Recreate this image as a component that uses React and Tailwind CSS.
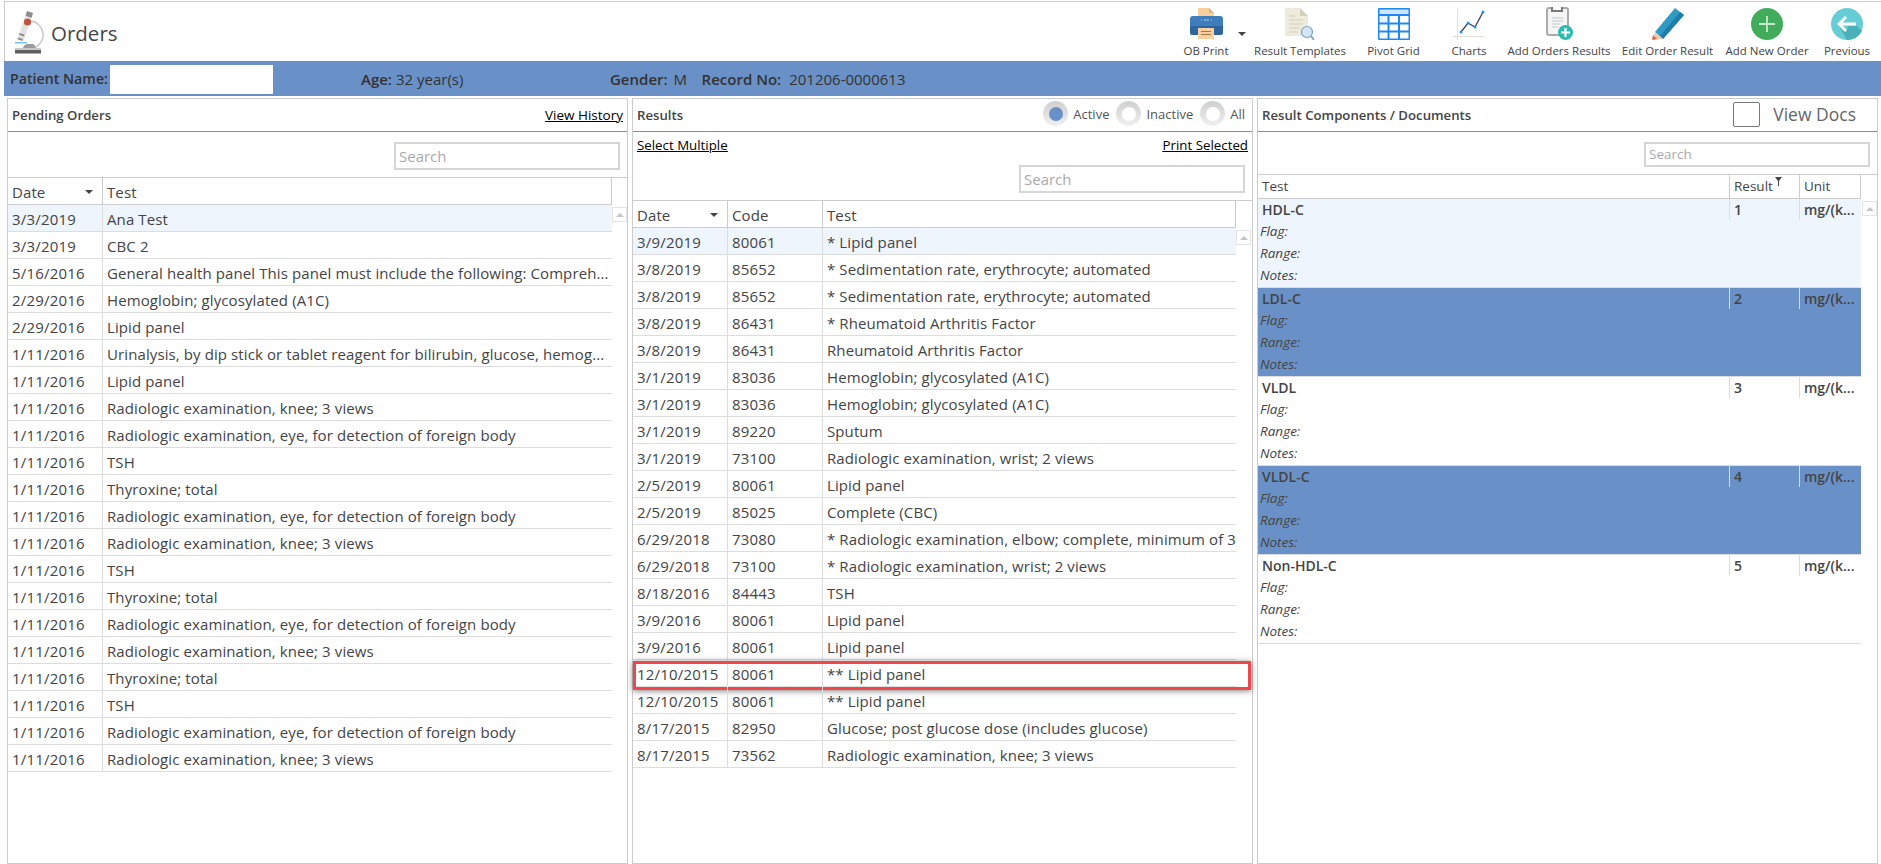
const font = "font-['Open_Sans','Liberation_Sans',sans-serif]";

const pendingOrders = [
	[ '3/3/2019', 'Ana Test' ],
	[ '3/3/2019', 'CBC 2' ],
	[ '5/16/2016', 'General health panel This panel must include the following: Compreh...' ],
	[ '2/29/2016', 'Hemoglobin; glycosylated (A1C)' ],
	[ '2/29/2016', 'Lipid panel' ],
	[ '1/11/2016', 'Urinalysis, by dip stick or tablet reagent for bilirubin, glucose, hemog...' ],
	[ '1/11/2016', 'Lipid panel' ],
	[ '1/11/2016', 'Radiologic examination, knee; 3 views' ],
	[ '1/11/2016', 'Radiologic examination, eye, for detection of foreign body' ],
	[ '1/11/2016', 'TSH' ],
	[ '1/11/2016', 'Thyroxine; total' ],
	[ '1/11/2016', 'Radiologic examination, eye, for detection of foreign body' ],
	[ '1/11/2016', 'Radiologic examination, knee; 3 views' ],
	[ '1/11/2016', 'TSH' ],
	[ '1/11/2016', 'Thyroxine; total' ],
	[ '1/11/2016', 'Radiologic examination, eye, for detection of foreign body' ],
	[ '1/11/2016', 'Radiologic examination, knee; 3 views' ],
	[ '1/11/2016', 'Thyroxine; total' ],
	[ '1/11/2016', 'TSH' ],
	[ '1/11/2016', 'Radiologic examination, eye, for detection of foreign body' ],
	[ '1/11/2016', 'Radiologic examination, knee; 3 views' ],
];

const results = [
	[ '3/9/2019', '80061', '* Lipid panel' ],
	[ '3/8/2019', '85652', '* Sedimentation rate, erythrocyte; automated' ],
	[ '3/8/2019', '85652', '* Sedimentation rate, erythrocyte; automated' ],
	[ '3/8/2019', '86431', '* Rheumatoid Arthritis Factor' ],
	[ '3/8/2019', '86431', 'Rheumatoid Arthritis Factor' ],
	[ '3/1/2019', '83036', 'Hemoglobin; glycosylated (A1C)' ],
	[ '3/1/2019', '83036', 'Hemoglobin; glycosylated (A1C)' ],
	[ '3/1/2019', '89220', 'Sputum' ],
	[ '3/1/2019', '73100', 'Radiologic examination, wrist; 2 views' ],
	[ '2/5/2019', '80061', 'Lipid panel' ],
	[ '2/5/2019', '85025', 'Complete (CBC)' ],
	[ '6/29/2018', '73080', '* Radiologic examination, elbow; complete, minimum of 3' ],
	[ '6/29/2018', '73100', '* Radiologic examination, wrist; 2 views' ],
	[ '8/18/2016', '84443', 'TSH' ],
	[ '3/9/2016', '80061', 'Lipid panel' ],
	[ '3/9/2016', '80061', 'Lipid panel' ],
	[ '12/10/2015', '80061', '** Lipid panel', true ],
	[ '12/10/2015', '80061', '** Lipid panel' ],
	[ '8/17/2015', '82950', 'Glucose; post glucose dose (includes glucose)' ],
	[ '8/17/2015', '73562', 'Radiologic examination, knee; 3 views' ],
];

const components = [
	{ name: 'HDL-C', value: '1', tone: 'light' },
	{ name: 'LDL-C', value: '2', tone: 'selected' },
	{ name: 'VLDL', value: '3' },
	{ name: 'VLDL-C', value: '4', tone: 'selected' },
	{ name: 'Non-HDL-C', value: '5' },
];

const Microscope = () => (
	<svg width="30" height="44" viewBox="0 0 30 44">
		<path d="M17 10 A14 14 0 0 1 22 36" fill="none" stroke="#c9c9c9" strokeWidth="1.5" />
		<path d="M13 0l6 2-1.5 5-6-2z" fill="#8d8d8d" />
		<path d="M11 5l6 2-7 22-6-2z" fill="#e3e3e3" />
		<circle cx="13.5" cy="11" r="3.6" fill="#c0523f" />
		<path d="M5.5 22l5 1.6-.6 1.8-5-1.6zM4 26.500l5 1.600-.6 1.800-5-1.600z" fill="#8d8d8d" />
		<rect x="1" y="31" width="12" height="1.500" fill="#79c4ef" />
		<path d="M9 37q1-4 5-4h4q3 0 4 4z" fill="#9b9b9b" />
		<rect x="1" y="37" width="26" height="2" fill="#c9c9c9" />
		<rect x="1" y="39" width="26" height="3.500" fill="#5f5f5f" />
	</svg>
);

const PrintIcon = () => (
	<svg width="33" height="31" viewBox="0 0 33 31">
		<path d="M8 0h11l5 5v9H8z" fill="#f9cf9f" />
		<path d="M19 0l5 5h-5z" fill="#e3b480" />
		<path d="M3 8h27q3 0 3 3v7H0v-7q0-3 3-3z" fill="#3f7dbd" />
		<path d="M0 18h33v7q0 2-2 2H2q-2 0-2-2z" fill="#2f659f" />
		<path d="M11 12h1M14 12h5M21 12h1" stroke="#a9c8e6" strokeWidth="1" />
		<rect x="8" y="20" width="16" height="11" fill="#f9cf9f" />
		<path d="M11 23.500h10M11 26.500h10" stroke="#a07a4e" strokeWidth="1" />
	</svg>
);

const TemplateIcon = () => (
	<svg width="32" height="32" viewBox="0 0 32 32">
		<path d="M1 0h15l8 8v20H1z" fill="#ecebdc" />
		<path d="M16 0l8 8h-8z" fill="#d5d2bb" />
		<path d="M5 8h6M5 12h14M5 16h14M5 20h11M5 24h9" stroke="#d3d0ba" strokeWidth="1.200" />
		<circle cx="23" cy="24" r="5.500" fill="#d3e6f7" stroke="#7fa4c6" strokeWidth="1.200" />
		<path d="M27 28l3 4" stroke="#7fa4c6" strokeWidth="1.800" />
	</svg>
);

const GridIcon = () => (
	<svg width="32" height="32" viewBox="0 0 32 32">
		<rect x="0" y="0" width="32" height="32" rx="1" fill="#1e88f5" />
		<rect x="1.500" y="1.500" width="29" height="4.500" fill="#cfe5fb" />
		<rect x="1.500" y="8" width="8" height="6.500" fill="#e9f3fd" />
		<g fill="#fff">
			<rect x="11.500" y="8" width="8.500" height="6.500" />
			<rect x="22" y="8" width="8.500" height="6.500" />
			<rect x="1.500" y="16.500" width="8" height="6" />
			<rect x="11.500" y="16.500" width="8.500" height="6" />
			<rect x="22" y="16.500" width="8.500" height="6" />
			<rect x="1.500" y="24.500" width="8" height="6" />
			<rect x="11.500" y="24.500" width="8.500" height="6" />
			<rect x="22" y="24.500" width="8.500" height="6" />
		</g>
	</svg>
);

const ChartIcon = () => (
	<svg width="32" height="32" viewBox="0 0 32 32">
		<path d="M4.500 0v32M0 28.500h32" stroke="#e2e0da" strokeWidth="1" fill="none" />
		<path d="M8 24l7-9 7 4 8-15" stroke="#33475b" strokeWidth="1.300" fill="none" />
		<g fill="#2f8fe6">
			<circle cx="8" cy="24" r="1.500" />
			<circle cx="15" cy="15" r="1.500" />
			<circle cx="22" cy="19" r="1.500" />
			<circle cx="30" cy="4" r="1.500" />
		</g>
	</svg>
);

const AddResultIcon = () => (
	<svg width="27" height="33" viewBox="0 0 27 33">
		<rect x="1" y="1" width="21" height="27" rx="2" fill="#f5f5f5" stroke="#aaa" strokeWidth="2" />
		<rect x="5" y="0" width="12" height="5" fill="#77797b" />
		<rect x="7" y="0" width="8" height="3" fill="#fff" />
		<path d="M6 11h11M6 14h11M6 17h8M6 20h6" stroke="#c4c9cc" strokeWidth="1.200" />
		<circle cx="19.500" cy="25.500" r="7.500" fill="#2bbdb3" />
		<path d="M19.500 21v9M15 25.500h9" stroke="#fff" strokeWidth="2.200" />
	</svg>
);

const PencilIcon = () => (
	<svg width="32" height="32" viewBox="0 0 32 32">
		<path d="M23 0l9 7L11 31 3 24z" fill="#2f9bc4" />
		<path d="M28 4l4 3L11 31 8 28z" fill="#1f7da6" />
		<path d="M3 24l8 7-10 1z" fill="#f2c9b0" />
		<path d="M0 32l1-5 4 4z" fill="#d66a5a" />
	</svg>
);

const PlusIcon = () => (
	<svg width="32" height="32" viewBox="0 0 32 32">
		<circle cx="16" cy="16" r="16" fill="#41ad5a" />
		<path d="M16 8v16M8 16h16" stroke="#c8e8cf" strokeWidth="1.800" />
	</svg>
);

const PreviousIcon = () => (
	<svg width="32" height="32" viewBox="0 0 32 32">
		<circle cx="16" cy="16" r="16" fill="#66cdd6" />
		<path d="M7 16l8 8 2-6h9l5 5a16 16 0 0 1-15 9z" fill="#4ab0b8" />
		<path d="M15 9l-7 7 7 7M8 16h17" stroke="#fff" strokeWidth="2.800" fill="none" />
	</svg>
);

const toolbar = [
	{ label: 'OB Print', icon: <PrintIcon />, width: 'w-[82px]', caret: true },
	{ label: 'Result Templates', icon: <TemplateIcon />, width: 'w-[106px]' },
	{ label: 'Pivot Grid', icon: <GridIcon />, width: 'w-[81px]' },
	{ label: 'Charts', icon: <ChartIcon />, width: 'w-[70px]' },
	{ label: 'Add Orders Results', icon: <AddResultIcon />, width: 'w-[110px]' },
	{ label: 'Edit Order Result', icon: <PencilIcon />, width: 'w-[107px]' },
	{ label: 'Add New Order', icon: <PlusIcon />, width: 'w-[92px]' },
	{ label: 'Previous', icon: <PreviousIcon />, width: 'w-[68px]' },
];

const ToolbarButton = ( { label, icon, width, caret } ) => (
	<div className={ `${ width } relative flex flex-col items-center pt-[5px]` }>
		<div className="flex h-[33px] items-center justify-center">{ icon }</div>
		<div className="mt-[3px] whitespace-nowrap text-[11.5px] leading-[16px] text-[#444]">
			{ label }
		</div>
		{ caret && (
			<span className="absolute right-[1px] top-[30px] h-0 w-0 border-x-[4px] border-t-[4px] border-x-transparent border-t-[#444]" />
		) }
	</div>
);

const SearchBox = ( { className } ) => (
	<div className={ `${ className } flex items-center border-2 border-[#d6d6d6] px-[3px] text-[#aaa]` }>
		Search
	</div>
);

const ScrollUp = ( { className } ) => (
	<div className={ `${ className } absolute flex h-[15px] w-[15px] items-center justify-center border border-[#e4e4e4]` }>
		<span className="h-0 w-0 border-x-[4px] border-b-[4px] border-x-transparent border-b-[#c4c4c4]" />
	</div>
);

const SortCaret = () => (
	<span className="ml-auto mr-[9px] h-0 w-0 border-x-[4px] border-t-[4px] border-x-transparent border-t-[#444]" />
);

const Radio = ( { label, active } ) => (
	<div className="flex items-center">
		<span className="flex h-[25px] w-[25px] items-center justify-center rounded-full bg-gradient-to-b from-[#cfcfcf] to-[#f0f0f0]">
			<span className={ `h-[14px] w-[14px] rounded-full ${ active ? 'bg-[#6991c7]' : 'bg-white' }` } />
		</span>
		<span className="ml-[5px] text-[13px] leading-[20px] text-[#555]">{ label }</span>
	</div>
);

const PanelHeader = ( { title, children } ) => (
	<div className="flex h-[33px] shrink-0 items-center justify-between border-b border-[#6991c7] pl-[4px] pr-[4px]">
		<span className="pt-[1px] text-[13.2px] font-semibold text-[#444]">{ title }</span>
		{ children }
	</div>
);

const PendingPanel = () => (
	<section className="relative h-full w-[621px] border border-[#ccc]">
		<PanelHeader title="Pending Orders">
			<a className="text-[13.5px] text-black underline">View History</a>
		</PanelHeader>
		<div className="flex h-[46px] justify-end border-b border-[#ccc] pr-[7px] pt-[10px]">
			<SearchBox className="h-[28px] w-[226px] text-[15px]" />
		</div>
		<div className="flex h-[27px] w-[604px] border-b border-[#ccc] text-[15px] tracking-[0.1px]">
			<div className="flex w-[95px] items-center border-r border-[#ccc] pl-[4px] pt-[2px]">
				Date
				<SortCaret />
			</div>
			<div className="flex flex-1 items-center border-r border-[#ccc] pl-[4px] pt-[2px]">Test</div>
		</div>
		<div className="w-[604px]">
			{ pendingOrders.map( ( [ date, test ], i ) => (
				<div
					key={ i }
					className={ `flex h-[27px] items-center border-b border-[#ddd] text-[15px] ${
						i === 0 ? 'bg-[#eef5fc]' : ''
					}` }
				>
					<div className="flex h-full w-[95px] items-center border-r border-[#ddd] pl-[4px] pt-[2px] tracking-[0.2px]">{ date }</div>
					<div className="whitespace-nowrap pl-[4px] pt-[2px] tracking-[0.1px]">{ test }</div>
				</div>
			) ) }
		</div>
		<ScrollUp className="left-[604px] top-[108px]" />
	</section>
);

const ResultsPanel = () => (
	<section className="relative h-full w-[621px] border border-[#ccc]">
		<PanelHeader title="Results">
			<div className="flex gap-[7px] pb-[3px] pr-[3px]">
				<Radio label="Active" active />
				<Radio label="Inactive" />
				<Radio label="All" />
			</div>
		</PanelHeader>
		<div className="h-[69px] border-b border-[#ccc] px-[4px]">
			<div className="flex h-[27px] items-center justify-between text-[13.3px] text-black underline">
				<a>Select Multiple</a>
				<a>Print Selected</a>
			</div>
			<div className="mt-[6px] flex justify-end pr-[3px]">
				<SearchBox className="h-[28px] w-[226px] text-[15px]" />
			</div>
		</div>
		<div className="flex h-[27px] w-[603px] border-b border-[#ccc] text-[15px] tracking-[0.1px]">
			<div className="flex w-[95px] items-center border-r border-[#ccc] pl-[4px] pt-[2px]">
				Date
				<SortCaret />
			</div>
			<div className="flex w-[95px] items-center border-r border-[#ccc] pl-[4px] pt-[2px]">Code</div>
			<div className="flex flex-1 items-center border-r border-[#ccc] pl-[4px] pt-[2px]">Test</div>
		</div>
		<div className="w-[603px]">
			{ results.map( ( [ date, code, test, marked ], i ) => (
				<div
					key={ i }
					className={ `relative flex h-[27px] items-center border-b border-[#ddd] text-[15px] ${
						i === 0 ? 'bg-[#eef5fc]' : ''
					}` }
				>
					<div className="flex h-full w-[95px] items-center border-r border-[#ddd] pl-[4px] pt-[2px] tracking-[0.2px]">{ date }</div>
					<div className="flex h-full w-[95px] items-center border-r border-[#ddd] pl-[4px] pt-[2px] tracking-[0.2px]">{ code }</div>
					<div className="whitespace-nowrap pl-[4px] pt-[2px] tracking-[0.1px]">{ test }</div>
					{ marked && (
						<div className="absolute left-0 top-[1px] h-[29px] w-[618px] border-[3px] border-[#f0474c] shadow-[0_1px_6px_rgba(0,0,0,0.5)]" />
					) }
				</div>
			) ) }
		</div>
		<ScrollUp className="left-[603px] top-[131px]" />
	</section>
);

const ComponentRow = ( { name, value, tone } ) => {
	const rowTone = {
		light: 'bg-[#eef5fc]',
		selected: 'bg-[#6991c7]',
	}[ tone ];

	return (
		<div className={ `h-[89px] border-b border-[#ddd] ${ rowTone ?? '' }` }>
			<div className="flex h-[21px] text-[14px] font-semibold">
				<div className="w-[472px] border-r border-[#ddd] pl-[4px]">{ name }</div>
				<div className="w-[70px] border-r border-[#ddd] pl-[4px]">{ value }</div>
				<div className="flex-1 pl-[4px]">mg/(k...</div>
			</div>
			{ [ 'Flag:', 'Range:', 'Notes:' ].map( ( label ) => (
				<div key={ label } className="h-[22px] pl-[2px] text-[13.5px] italic leading-[22px]">
					{ label }
				</div>
			) ) }
		</div>
	);
};

const ComponentsPanel = () => (
	<section className="relative h-full w-[621px] border border-[#ccc]">
		<PanelHeader title="Result Components / Documents">
			<div className="flex items-center pb-[2px] pr-[17px]">
				<span className="h-[25px] w-[27px] rounded-[2px] border border-[#777]" />
				<span className="ml-[13px] text-[17.5px] text-[#666]">View Docs</span>
			</div>
		</PanelHeader>
		<div className="flex h-[43px] justify-end border-b border-[#ccc] pr-[7px] pt-[10px]">
			<SearchBox className="h-[25px] w-[226px] text-[13.5px]" />
		</div>
		<div className="flex h-[24px] w-[603px] border-b border-[#ccc] text-[13.5px]">
			<div className="flex w-[472px] items-center border-r border-[#ccc] pl-[4px]">Test</div>
			<div className="relative flex w-[70px] items-center border-r border-[#ccc] pl-[4px]">
				Result
				<svg className="absolute left-[45px] top-[2px]" width="7" height="9" viewBox="0 0 7 9">
					<path d="M0 0h7L4 4v5H3V4z" fill="#444" />
				</svg>
			</div>
			<div className="flex flex-1 items-center border-r border-[#ccc] pl-[4px]">Unit</div>
		</div>
		<div className="w-[603px]">
			{ components.map( ( row ) => (
				<ComponentRow key={ row.name } { ...row } />
			) ) }
		</div>
		<ScrollUp className="left-[604px] top-[102px]" />
	</section>
);

const App = () => (
	<div className={ `${ font } flex h-screen flex-col overflow-hidden bg-white pl-[4px] pt-[1px] text-[#444]` }>
		<div className="flex h-[60px] shrink-0 items-center justify-between border-l border-t border-[#ccc]">
			<div className="flex items-center pl-[9px] pt-[2px]">
				<Microscope />
				<h1 className="ml-[7px] mt-[1px] text-[20.5px] font-medium text-[#444]">Orders</h1>
			</div>
			<div className="flex self-start">
				{ toolbar.map( ( item ) => (
					<ToolbarButton key={ item.label } { ...item } />
				) ) }
			</div>
		</div>
		<div className="flex h-[35px] shrink-0 items-center bg-[#6991c7] pl-[6px] pt-[1px] text-[15px] text-[#333]">
			<span className="w-[100px] whitespace-nowrap text-[14.2px] font-semibold">Patient Name:</span>
			<span className="mb-[2px] h-[29px] w-[163px] self-end bg-white" />
			<span className="ml-[88px] font-semibold">Age:</span>
			<span className="ml-[4px] w-[214px]">32 year(s)</span>
			<span className="font-semibold">Gender:</span>
			<span className="ml-[6px] w-[28px]">M</span>
			<span className="font-semibold">Record No:</span>
			<span className="ml-[8px]">201206-0000613</span>
		</div>
		<div className="flex min-h-0 flex-1 gap-[4px] pl-[3px] pt-[2px]">
			<PendingPanel />
			<ResultsPanel />
			<ComponentsPanel />
		</div>
	</div>
);

export default App;
